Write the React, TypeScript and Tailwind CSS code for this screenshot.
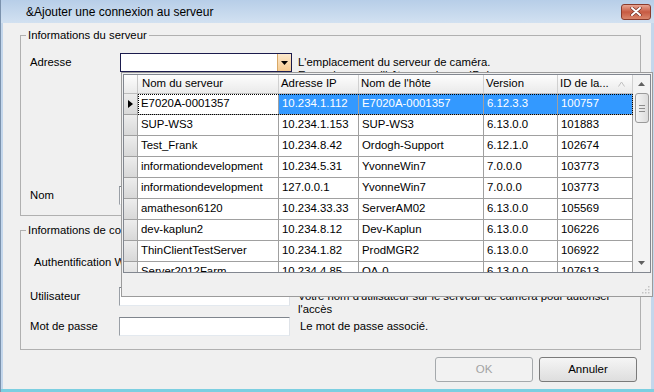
import React from 'react'

const colW = ['w-[141px]', 'w-[80px]', 'w-[125px]', 'w-[74px]', 'w-[75px]']

const headers = ['Nom du serveur', 'Adresse IP', "Nom de l'hôte", 'Version', 'ID de la...']

const servers = [
    ['E7020A-0001357', '10.234.1.112', 'E7020A-0001357', '6.12.3.3', '100757'],
    ['SUP-WS3', '10.234.1.153', 'SUP-WS3', '6.13.0.0', '101883'],
    ['Test_Frank', '10.234.8.42', 'Ordogh-Support', '6.12.1.0', '102674'],
    ['informationdevelopment', '10.234.5.31', 'YvonneWin7', '7.0.0.0', '103773'],
    ['informationdevelopment', '127.0.0.1', 'YvonneWin7', '7.0.0.0', '103773'],
    ['amatheson6120', '10.234.33.33', 'ServerAM02', '6.13.0.0', '105569'],
    ['dev-kaplun2', '10.234.8.12', 'Dev-Kaplun', '6.13.0.0', '106226'],
    ['ThinClientTestServer', '10.234.1.82', 'ProdMGR2', '6.13.0.0', '106922'],
    ['Server2012Farm', '10.234.4.85', 'QA-0', '6.13.0.0', '107613'],
]

function CloseButton() {
    return (
        <div className="w-[30px] h-[16px] rounded-[3px] border border-[#8a3b2c] bg-linear-to-b from-[#e7a593] via-[#c75a42] to-[#d9866c] flex items-center justify-center">
            <svg width="12" height="9" viewBox="0 0 12 9">
                <path d="M2 1 L10 8 M10 1 L2 8" stroke="#6b2a1f" strokeWidth="3.2" strokeLinecap="round" />
                <path d="M2 1 L10 8 M10 1 L2 8" stroke="#ffffff" strokeWidth="2" strokeLinecap="round" />
            </svg>
        </div>
    )
}

function TextInput({ w = 'w-[171px]' }: { w?: string }) {
    return (
        <div className={`${w} h-[19px] bg-white border border-t-[#7f858d] border-l-[#9a9fa6] border-r-[#dfe3e8] border-b-[#e3e9ef]`} />
    )
}

function Combo() {
    return (
        <div className="w-[172px] h-[19px] border border-[#1b1b4d] bg-white flex justify-end">
            <div className="w-[14px] h-full bg-linear-to-b from-[#fde9cd] to-[#f6cb90] border-l border-[#d8a866] flex items-center justify-center">
                <svg width="7" height="4" viewBox="0 0 7 4">
                    <path d="M0 0 H7 L3.5 4 Z" fill="#000" />
                </svg>
            </div>
        </div>
    )
}

function Button({ label, disabled }: { label: string; disabled?: boolean }) {
    return (
        <button
            disabled={disabled}
            className={`w-[98px] h-[25px] rounded-[3px] border text-[11.5px] ${disabled ? 'border-[#a5a9ac] bg-[#f2f2f2] text-[#a3a3a3]' : 'border-[#7a7a7a] bg-linear-to-b from-[#f5f5f5] to-[#dedede] text-black'}`}
        >
            {label}
        </button>
    )
}

function ScrollBar() {
    return (
        <div className="w-[17px] flex flex-col bg-[#f3f3f3]">
            <div className="h-[18px] flex items-center justify-center">
                <svg width="7" height="4" viewBox="0 0 7 4">
                    <path d="M0 4 H7 L3.5 0 Z" fill="#606060" />
                </svg>
            </div>
            <div className="ml-[2px] mr-[1px] h-[30px] rounded-[3px] border border-[#9a9a9a] bg-linear-to-r from-[#f4f4f4] to-[#dcdcdc] flex flex-col items-center justify-center gap-[2px]">
                <div className="w-[6px] h-px bg-[#8c8c8c]" />
                <div className="w-[6px] h-px bg-[#8c8c8c]" />
                <div className="w-[6px] h-px bg-[#8c8c8c]" />
            </div>
            <div className="flex-1" />
            <div className="h-[18px] flex items-center justify-center">
                <svg width="7" height="4" viewBox="0 0 7 4">
                    <path d="M0 0 H7 L3.5 4 Z" fill="#606060" />
                </svg>
            </div>
        </div>
    )
}

function ServerPopup() {
    return (
        <div className="absolute left-[120px] top-[72px] w-[532px] h-[225px] border border-[#9b9b9b] bg-[#f0f0f0] p-px flex flex-col">
            <div className="h-[199px] border border-[#828790] flex bg-white">
                <div className="w-[509px] flex flex-col overflow-hidden text-[11.4px]">
                    {/* En-têtes */}
                    <div className="flex h-[19px] shrink-0 border-b border-[#bdbdbd] bg-linear-to-b from-[#fdfdfd] to-[#eaeaea]">
                        <div className="w-[14px] border-r border-[#c8c8c8]" />
                        {headers.map((h, i) => (
                            <div key={h} className={`${colW[i]} border-r border-[#d0d0d0] flex items-center whitespace-nowrap ${i === 0 ? 'pl-[4px]' : 'pl-[2px]'}`}>
                                {h}
                                {i === 4 && (
                                    <svg width="7" height="6" viewBox="0 0 7 6" className="ml-[9px]">
                                        <path d="M0.5 5.5 L3.5 1 L6.5 5.5" fill="none" stroke="#c0c0c0" strokeWidth="1" />
                                    </svg>
                                )}
                            </div>
                        ))}
                    </div>

                    {/* Lignes */}
                    {servers.map((row, r) => {
                        const sel = r === 0
                        return (
                            <div key={r} className="flex h-[21px] shrink-0">
                                <div className="w-[14px] border-r border-b border-[#a0a0a0] bg-linear-to-b from-[#ededed] to-[#d8d8d8] flex items-center justify-center">
                                    {sel && (
                                        <svg width="5" height="8" viewBox="0 0 5 8">
                                            <path d="M0 0 L5 4 L0 8 Z" fill="#000" />
                                        </svg>
                                    )}
                                </div>
                                <div className={`flex ${sel ? 'outline-1 outline-dotted outline-black outline-offset-[-1px]' : ''}`}>
                                    {row.map((v, i) => (
                                        <div
                                            key={i}
                                            className={`${colW[i]} h-full border-r border-b border-[#a0a0a0] pl-[3px] flex items-center whitespace-nowrap overflow-hidden ${sel && i > 0 ? 'bg-[#3399ff] text-white' : 'bg-white text-black'}`}
                                        >
                                            {v}
                                        </div>
                                    ))}
                                </div>
                            </div>
                        )
                    })}
                </div>
                <ScrollBar />
            </div>
            <div className="flex-1 flex justify-end items-end pr-px pb-px">
                <svg width="9" height="9" viewBox="0 0 9 9">
                    <rect x="7" y="1" width="1.5" height="1.5" fill="#c4c4c4" />
                    <rect x="4" y="4" width="1.5" height="1.5" fill="#c4c4c4" />
                    <rect x="7" y="4" width="1.5" height="1.5" fill="#c4c4c4" />
                    <rect x="1" y="7" width="1.5" height="1.5" fill="#c4c4c4" />
                    <rect x="4" y="7" width="1.5" height="1.5" fill="#c4c4c4" />
                    <rect x="7" y="7" width="1.5" height="1.5" fill="#c4c4c4" />
                </svg>
            </div>
        </div>
    )
}

export default function App() {
    return (
        <div className="relative w-[654px] h-[392px] overflow-hidden flex flex-col bg-[#c4d7ec] border-l border-[#7b92ad] font-['Liberation_Sans',Arial,sans-serif] text-black">
            {/* Barre de titre */}
            <div className="h-[23px] shrink-0 flex items-center justify-between pl-[25px] pr-[3px] bg-linear-to-b from-[#b7cee8] to-[#d2e1f1]">
                <span className="text-[12px]">{'&Ajouter une connexion au serveur'}</span>
                <CloseButton />
            </div>

            {/* Corps */}
            <div className="ml-[2px] mr-[3px] flex-1 bg-[#f0f0f0] flex flex-col text-[11.3px]">
                <fieldset className="mt-[5px] ml-[17px] w-[621px] h-[188px] border border-[#b0b0b0]">
                    <legend className="ml-[5px] px-[2px] leading-[14px]">Informations du serveur</legend>
                    <div className="pl-[9px]">
                        <div className="mt-[11px] flex items-start">
                            <div className="w-[90px] h-[19px] flex items-center">Adresse</div>
                            <Combo />
                            <div className="ml-[6px] mt-[3px] leading-[13px]">
                                L'emplacement du serveur de caméra.
                                <br />
                                Exemple : nom d'hôte ou adresse IP du serveur.
                            </div>
                        </div>
                        <div className="mt-[103px] flex items-center h-[20px]">
                            <div className="w-[89px]">Nom</div>
                            <TextInput w="w-[172px]" />
                        </div>
                    </div>
                </fieldset>

                <fieldset className="mt-[7px] ml-[17px] w-[621px] h-[127px] border border-[#b0b0b0]">
                    <legend className="ml-[5px] px-[2px] leading-[14px]">Informations de connexion</legend>
                    <div className="pl-[9px]">
                        <div className="mt-[15px] h-[20px] flex items-center pl-[4px]">Authentification Windows</div>
                        <div className="mt-[15px] flex items-start">
                            <div className="w-[89px] h-[19px] flex items-center">Utilisateur</div>
                            <TextInput />
                            <div className="ml-[8px] mt-[3px] leading-[13px]">
                                Votre nom d'utilisateur sur le serveur de caméra pour autoriser
                                <br />
                                l'accès
                            </div>
                        </div>
                        <div className="mt-px flex items-center h-[19px]">
                            <div className="w-[89px]">Mot de passe</div>
                            <TextInput />
                            <div className="ml-[10px]">Le mot de passe associé.</div>
                        </div>
                    </div>
                </fieldset>

                <div className="mt-[7px] flex justify-end gap-[6px] pr-[14px]">
                    <Button label="OK" disabled />
                    <Button label="Annuler" />
                </div>
            </div>
            <div className="h-[3px] shrink-0 bg-[#7ccfe1]" />

            {/* Liste déroulante des serveurs */}
            <ServerPopup />
        </div>
    )
}
